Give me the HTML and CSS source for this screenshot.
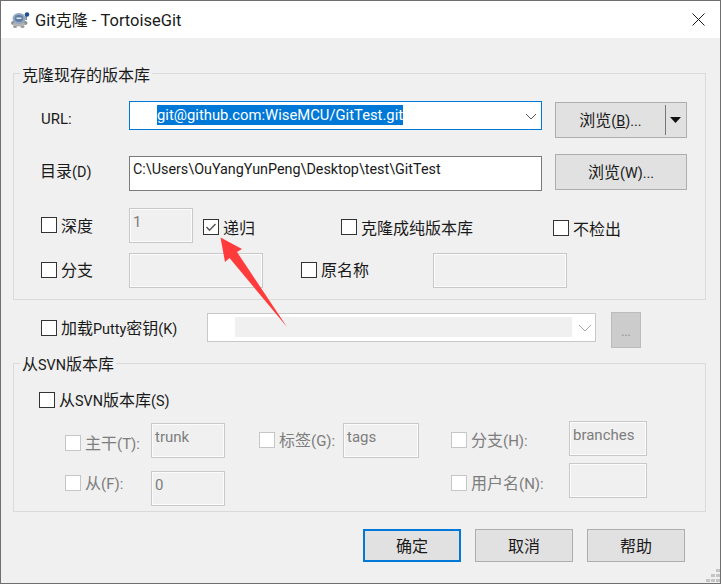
FILE: index.html
```html
<!DOCTYPE html>
<html lang="zh-CN">
<head>
<meta charset="utf-8">
<title>Git克隆 - TortoiseGit</title>
<link rel="stylesheet" href="styles.css">
</head>
<body>
<div class="window">
  <header class="titlebar">
    <svg class="app-icon" width="20" height="18" viewBox="0 0 20 18">
      <ellipse cx="3.500" cy="12" rx="2.500" ry="2" fill="#8d8d8d"/>
      <ellipse cx="15" cy="12" rx="2.500" ry="2" fill="#8d8d8d"/>
      <ellipse cx="5" cy="15.500" rx="2" ry="1.500" fill="#9a9a9a"/>
      <ellipse cx="12.500" cy="15.500" rx="2" ry="1.500" fill="#9a9a9a"/>
      <ellipse cx="9" cy="13" rx="6" ry="2.500" fill="#b4b4b4"/>
      <ellipse cx="9" cy="7.500" rx="6.500" ry="5.500" fill="#93a8c0"/>
      <ellipse cx="9" cy="7.500" rx="4.200" ry="3.400" fill="#5f7ca3"/>
      <rect x="6.500" y="6.500" width="5" height="1.500" fill="#dfe6ee"/>
      <rect x="15.500" y="5" width="1.300" height="4" fill="#5b6f86"/>
      <circle cx="17" cy="3.500" r="2.300" fill="#1c4f8c"/>
    </svg>
    <span class="title">Git<span class="zh">克隆</span> - TortoiseGit</span>
    <svg class="close" width="13" height="13" viewBox="0 0 13 13"><path d="M.5.5l12 12M12.500.5l-12 12" stroke="#1a1a1a" stroke-width="1" fill="none"/></svg>
  </header>

  <main class="content">
    <section class="group group-clone">
      <div class="legend zh">克隆现存的版本库</div>

      <div class="row row-url">
        <span class="lbl lbl-url">URL:</span>
        <div class="combo combo-url">
          <span class="selected">git@github.com:WiseMCU/GitTest.git</span>
          <svg class="chev" width="12" height="7" viewBox="0 0 12 7"><path d="M1 1l5 5 5-5" stroke="#555" fill="none"/></svg>
        </div>
        <div class="btn btn-split">
          <span class="btn-main"><span class="zh">浏览</span>(<u>B</u>)...</span>
          <span class="divider"></span>
          <svg class="caret" width="11" height="6" viewBox="0 0 11 6"><path d="M0 0h11L5.500 6z" fill="#111"/></svg>
        </div>
      </div>

      <div class="row row-dir">
        <span class="lbl lbl-dir"><span class="zh">目录</span>(D)</span>
        <div class="input input-dir">C:\Users\OuYangYunPeng\Desktop\test\GitTest</div>
        <div class="btn btn-browse"><span><span class="zh">浏览</span>(W)...</span></div>
      </div>

      <div class="row row-depth">
        <label class="chk c-depth"><i class="box"></i><span class="t"><span class="zh">深度</span></span></label>
        <div class="field f-depth">1</div>
        <label class="chk c-recursive"><i class="box"><svg width="14" height="14" viewBox="0 0 14 14"><path d="M2.500 7l3 3.200L11.500 4" stroke="#555" stroke-width="1.500" fill="none"/></svg></i><span class="t"><span class="zh">递归</span></span></label>
        <label class="chk c-bare"><i class="box"></i><span class="t"><span class="zh">克隆成纯版本库</span></span></label>
        <label class="chk c-nocheckout"><i class="box"></i><span class="t"><span class="zh">不检出</span></span></label>
      </div>

      <div class="row row-branch">
        <label class="chk c-branch"><i class="box"></i><span class="t"><span class="zh">分支</span></span></label>
        <div class="field f-branch"></div>
        <label class="chk c-origin"><i class="box"></i><span class="t"><span class="zh">原名称</span></span></label>
        <div class="field f-origin"></div>
      </div>
    </section>

    <div class="row row-putty">
      <label class="chk c-putty"><i class="box"></i><span class="t"><span class="zh">加载</span>Putty<span class="zh">密钥</span>(K)</span></label>
      <div class="combo-off">
        <span class="combo-fill"></span>
        <svg class="chev-off" width="14" height="8" viewBox="0 0 14 8"><path d="M1 1l6 6 6-6" stroke="#a8a8a8" fill="none"/></svg>
      </div>
      <div class="btn-dots">...</div>
    </div>

    <section class="group group-svn">
      <div class="legend legend-svn"><span class="zh">从</span>SVN<span class="zh">版本库</span></div>

      <label class="chk c-svn"><i class="box"></i><span class="t"><span class="zh">从</span>SVN<span class="zh">版本库</span>(S)</span></label>

      <div class="row row-svn-a">
        <label class="chk off c-trunk"><i class="box"></i><span class="t"><span class="zh">主干</span>(T):</span></label>
        <div class="field f-trunk">trunk</div>
        <label class="chk off c-tags"><i class="box"></i><span class="t"><span class="zh">标签</span>(G):</span></label>
        <div class="field f-tags">tags</div>
        <label class="chk off c-branches"><i class="box"></i><span class="t"><span class="zh">分支</span>(H):</span></label>
        <div class="field f-branches">branches</div>
      </div>

      <div class="row row-svn-b">
        <label class="chk off c-from"><i class="box"></i><span class="t"><span class="zh">从</span>(F):</span></label>
        <div class="field f-from">0</div>
        <label class="chk off c-user"><i class="box"></i><span class="t"><span class="zh">用户名</span>(N):</span></label>
        <div class="field f-user"></div>
      </div>
    </section>

    <footer class="actions">
      <div class="btn btn-action btn-default"><span class="zh">确定</span></div>
      <div class="btn btn-action"><span class="zh">取消</span></div>
      <div class="btn btn-action"><span class="zh">帮助</span></div>
    </footer>
  </main>

  <svg class="arrow" width="721" height="584" viewBox="0 0 721 584"><path d="M220.500 237.500L242 249 237 252 287 327 229.500 258 225 262z" fill="#ff3b3b"/></svg>
  <svg class="grip" width="14" height="13" viewBox="0 0 14 13"><path d="M10 0h4v3h-4zM5 5h4v3H5zM10 5h4v3h-4zM0 10h4v3H0zM5 10h4v3H5zM10 10h4v3h-4z" fill="#c4c4c4"/></svg>
</div>
</body>
</html>
```

FILE: styles.css
```css
* { box-sizing: border-box; }
html, body { margin: 0; padding: 0; }
body {
  width: 721px;
  height: 584px;
  overflow: hidden;
  font: 15px/20px Roboto, "Noto Sans CJK SC", sans-serif;
  color: #1a1a1a;
}
u { text-decoration: underline; }
.zh { font-size: 16px; font-family: "Noto Sans CJK SC", sans-serif; }
.t { display: block; height: 20px; }

.window {
  position: relative;
  width: 721px;
  height: 584px;
  border: 1px solid #6f6f6f;
  background: #f0f0f0;
  overflow: hidden;
}

.titlebar {
  display: flex;
  align-items: center;
  height: 37px;
  padding: 0 15px 0 9px;
  background: #fff;
}
.app-icon { margin-right: 5px; }
.title { flex: 1; font-size: 16.500px; }

.content { padding: 35px 0 0 12px; }

.group {
  width: 693px;
  border: 1px solid #dadada;
}
.group-clone { height: 227px; }
.group-svn { height: 149px; margin-top: 15px; }

.legend {
  width: fit-content;
  margin: -10px 0 0 6px;
  padding: 0 2px;
  height: 20px;
  background: #f0f0f0;
}
.legend-svn { margin: -11px 0 0 6px; font-size: 14.400px; }

.row { display: flex; align-items: flex-start; }
.lbl { display: block; }

.row-url { height: 38px; margin: 17px 0 0 27px; }
.row-dir { height: 37px; margin: 15px 0 0 27px; }
.row-depth { height: 35px; margin: 17px 0 0 27px; }
.row-branch { height: 35px; margin: 10px 0 0 27px; }
.row-putty { height: 36px; margin: 12px 0 0 28px; }
.row-svn-a { height: 37px; margin: 11px 0 0 51px; }
.row-svn-b { height: 43px; margin: 5px 0 0 51px; }

.lbl-url { width: 88px; margin-top: 8px; }
.lbl-dir { width: 89px; margin: 6px 0 0 -1px; font-size: 14.400px; }

.combo {
  position: relative;
  width: 413px;
  height: 29px;
  padding: 3px 0 0 27px;
  border: 1px solid #0078d7;
  background: #fff;
}
.selected {
  display: inline-block;
  height: 20px;
  padding: 0;
  background: #0078d7;
  color: #fff;
  font-size: 14.800px;
}
.chev { position: absolute; right: 4px; top: 11px; }

.btn {
  display: flex;
  align-items: center;
  justify-content: center;
  border: 1px solid #adadad;
  background: #e1e1e1;
}
.btn-split {
  position: relative;
  width: 132px;
  height: 36px;
  margin: 1px 0 0 13px;
  justify-content: flex-start;
}
.btn-main { width: 109px; text-align: center; font-size: 14.400px; }
.divider { width: 1px; height: 30px; background: #777; }
.caret { margin-left: 4px; }
.btn-browse { width: 132px; height: 36px; margin-left: 13px; font-size: 14.400px; }

.input {
  width: 413px;
  height: 35px;
  margin-top: 2px;
  padding: 3px 0 0 3px;
  border: 1px solid #7a7a7a;
  background: #fff;
  font-size: 14.350px;
}

.chk { display: flex; align-items: center; height: 20px; white-space: nowrap; }
.box {
  display: flex;
  align-items: center;
  justify-content: center;
  flex: none;
  width: 16px;
  height: 16px;
  margin-right: 4px;
  border: 1px solid #333;
  background: #fff;
}
.chk.off { color: #7d7d7d; }
.chk.off .box { border-color: #c6c6c6; }

.field {
  height: 35px;
  padding: 3px 0 0 3px;
  border: 1px solid #c8c8c8;
  box-shadow: inset 0 0 0 1px #fbfbfb;
  color: #7d7d7d;
}

.c-depth { width: 88px; margin-top: 7px; }
.f-depth { width: 64px; }
.c-recursive { width: 138px; margin: 9px 0 0 10px; }
.c-bare { width: 212px; margin-top: 9px; }
.c-nocheckout { margin-top: 10px; }

.c-branch { width: 88px; margin-top: 7px; }
.c-branch .t, .c-origin .t, .c-putty .t, .c-svn .t, .chk.off .t { margin-bottom: 2px; }
.f-branch { width: 134px; }
.c-origin { width: 132px; margin: 7px 0 0 38px; }
.f-origin { width: 134px; }

.c-putty { width: 166px; margin-top: 6px; font-size: 14.400px; }
.combo-off {
  position: relative;
  width: 389px;
  height: 29px;
  margin-top: 1px;
  padding: 3px 0 0 27px;
  border: 1px solid #c8c8c8;
  background: #fff;
}
.combo-fill { display: block; width: 337px; height: 20px; background: #f0f0f0; }
.chev-off { position: absolute; right: 3px; top: 10px; }
.btn-dots {
  display: flex;
  justify-content: center;
  align-items: flex-end;
  width: 30px;
  height: 36px;
  margin-left: 15px;
  padding-bottom: 5px;
  border: 1px solid #bcbcbc;
  background: #cccccc;
  color: #8a8a8a;
  font-size: 12px;
}

.c-svn { width: fit-content; margin: 17px 0 0 25px; font-size: 14.400px; }

.c-trunk { width: 86px; margin-top: 12px; }
.f-trunk { width: 74px; margin-top: 2px; }
.c-tags { width: 84px; margin: 9px 0 0 34px; }
.f-tags { width: 76px; margin-top: 2px; }
.c-branches { width: 118px; margin: 9px 0 0 32px; }
.f-branches { width: 78px; }

.c-from { width: 86px; margin-top: 10px; }
.f-from { width: 74px; margin-top: 8px; }
.c-user { width: 118px; margin: 10px 0 0 226px; }
.f-user { width: 78px; }

.actions { display: flex; gap: 14px; margin: 17px 0 0 350px; }
.btn-action { width: 98px; height: 33px; padding-bottom: 2px; }
.btn-default { border: 2px solid #0078d7; }

.arrow { position: absolute; left: -1px; top: -1px; pointer-events: none; }
.grip { position: absolute; right: 0; bottom: 1px; }
```
